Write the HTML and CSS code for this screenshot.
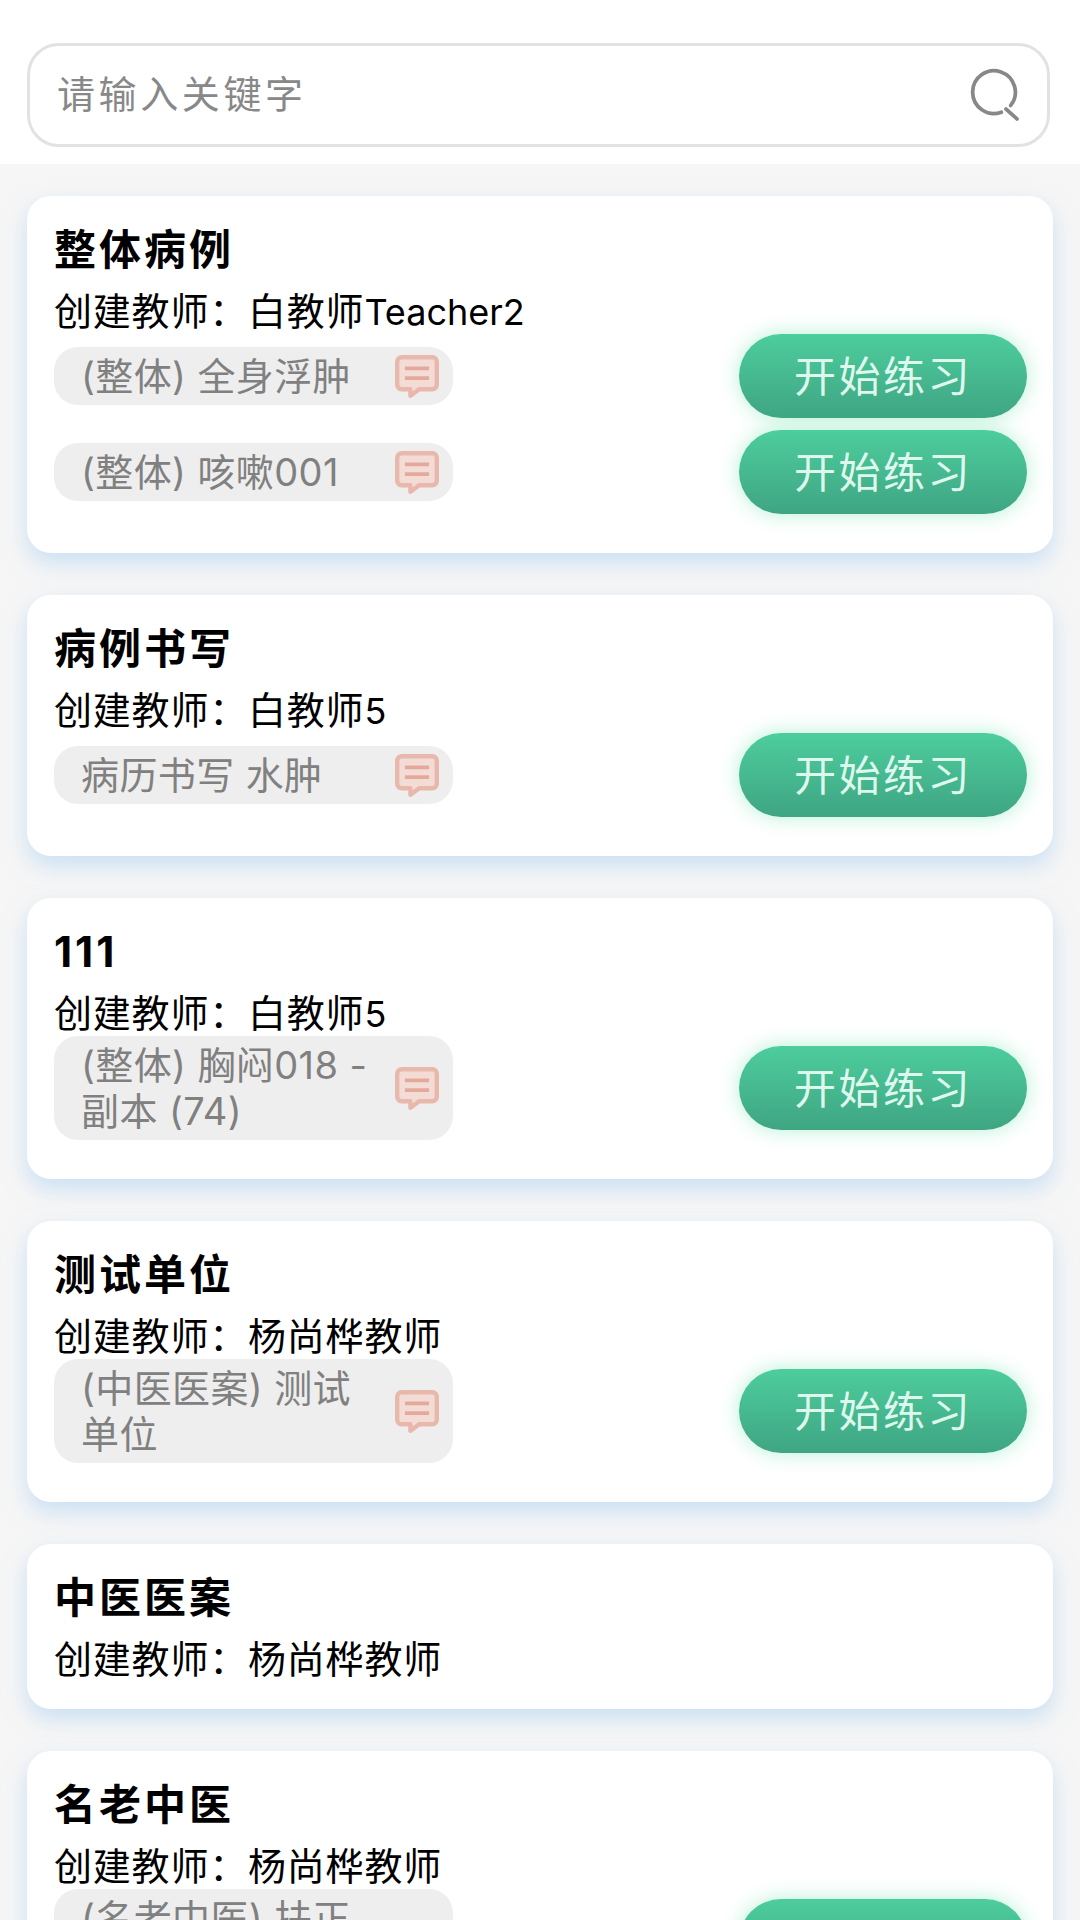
FILE: index.html
```html
<!DOCTYPE html>
<html lang="zh-CN">
<head>
    <meta charset="UTF-8">
    <meta name="viewport" content="width=device-width, initial-scale=1.0">
    <title>病例练习</title>
    <link rel="stylesheet" href="styles.css">
</head>
<body>
    <header class="search-bar">
        <div class="search-box">
            <span class="search-placeholder">请输入关键字</span>
            <svg class="search-icon" viewBox="0 0 48 48" fill="none" stroke="#888" stroke-width="3.6" stroke-linecap="round">
                <path d="M32 40.5A20.5 20.5 0 1 1 41 34"/>
                <path d="M36.5 37.5L47 47"/>
            </svg>
        </div>
    </header>

    <main class="list">
        <section class="card">
            <h2 class="card-title">整体病例</h2>
            <p class="card-teacher"><span class="teacher-label">创建教师：</span>白教师<span class="latin">Teacher2</span></p>
            <div class="case-row">
                <div class="case-pill">
                    <span class="case-name">(整体) 全身浮肿</span>
                    <svg class="case-icon" viewBox="0 0 40 40"><use href="#msg"/></svg>
                </div>
                <button class="start-btn">开始练习</button>
            </div>
            <div class="case-row">
                <div class="case-pill">
                    <span class="case-name">(整体) 咳嗽001</span>
                    <svg class="case-icon" viewBox="0 0 40 40"><use href="#msg"/></svg>
                </div>
                <button class="start-btn">开始练习</button>
            </div>
        </section>

        <section class="card">
            <h2 class="card-title">病例书写</h2>
            <p class="card-teacher"><span class="teacher-label">创建教师：</span>白教师<span class="latin">5</span></p>
            <div class="case-row">
                <div class="case-pill">
                    <span class="case-name">病历书写 水肿</span>
                    <svg class="case-icon" viewBox="0 0 40 40"><use href="#msg"/></svg>
                </div>
                <button class="start-btn">开始练习</button>
            </div>
        </section>

        <section class="card">
            <h2 class="card-title">111</h2>
            <p class="card-teacher"><span class="teacher-label">创建教师：</span>白教师<span class="latin">5</span></p>
            <div class="case-row">
                <div class="case-pill">
                    <span class="case-name">(整体) 胸闷018 - 副本 (74)</span>
                    <svg class="case-icon" viewBox="0 0 40 40"><use href="#msg"/></svg>
                </div>
                <button class="start-btn">开始练习</button>
            </div>
        </section>

        <section class="card">
            <h2 class="card-title">测试单位</h2>
            <p class="card-teacher"><span class="teacher-label">创建教师：</span>杨尚桦教师</p>
            <div class="case-row">
                <div class="case-pill">
                    <span class="case-name">(中医医案) 测试单位</span>
                    <svg class="case-icon" viewBox="0 0 40 40"><use href="#msg"/></svg>
                </div>
                <button class="start-btn">开始练习</button>
            </div>
        </section>

        <section class="card">
            <h2 class="card-title">中医医案</h2>
            <p class="card-teacher"><span class="teacher-label">创建教师：</span>杨尚桦教师</p>
        </section>

        <section class="card">
            <h2 class="card-title">名老中医</h2>
            <p class="card-teacher"><span class="teacher-label">创建教师：</span>杨尚桦教师</p>
            <div class="case-row">
                <div class="case-pill">
                    <span class="case-name">(名老中医) 扶正祛邪方案</span>
                    <svg class="case-icon" viewBox="0 0 40 40"><use href="#msg"/></svg>
                </div>
                <button class="start-btn">开始练习</button>
            </div>
        </section>
    </main>

    <!-- shared speech bubble icon -->
    <svg class="icon-defs" aria-hidden="true">
        <symbol id="msg" viewBox="0 0 40 40">
            <path d="M6 3h28a4 4 0 0 1 4 4v21a4 4 0 0 1-4 4H22l-8 6v-6H6a4 4 0 0 1-4-4V7a4 4 0 0 1 4-4z" fill="#f3dcd6" stroke="#e9b8ac" stroke-width="4" stroke-linejoin="round"/>
            <path d="M9 13h22M9 22h22" stroke="#e5a99c" stroke-width="3.4"/>
        </symbol>
    </svg>
</body>
</html>
```

FILE: styles.css
```css
* {
    box-sizing: border-box;
}
html, body {
    margin: 0;
    padding: 0;
    height: 1920px;
    overflow: hidden;
}
body {
    background-color: #f6f6f6;
    font-family: Inter, "Noto Sans CJK SC", sans-serif;
    color: #000;
}
.search-bar {
    background-color: #fff;
    height: 164px;
    padding: 43px 30px 0 27px;
}
.search-box {
    display: flex;
    align-items: center;
    justify-content: space-between;
    height: 104px;
    padding: 0 29px 0 27px;
    border: 3px solid #e2e2e2;
    border-radius: 32px;
}
.search-placeholder {
    padding-bottom: 8px;
    font-size: 38px;
    letter-spacing: 3.6px;
    color: #888;
}
.search-icon {
    width: 50px;
    height: 50px;
    overflow: visible;
}
.list {
    display: flex;
    flex-direction: column;
    gap: 42px;
    padding: 32px 27px 0;
}
.card {
    background-color: #fff;
    border-radius: 24px;
    padding: 24px 26px 27px 27px;
    box-shadow: 0 10px 22px rgba(165, 205, 240, 0.55);
}
.card-title {
    margin: 0 0 8px;
    font-size: 42px;
    line-height: 60px;
    font-weight: 700;
    letter-spacing: 3px;
}
.card-teacher {
    height: 46px;
    margin: 0;
    font-size: 38px;
    line-height: 46px;
    letter-spacing: 0.8px;
}
.latin {
    font-size: 36px;
    letter-spacing: 0;
}
.case-row {
    display: flex;
    align-items: center;
    justify-content: space-between;
    margin-bottom: 12px;
}
.case-pill {
    display: flex;
    align-items: center;
    justify-content: space-between;
    width: 399px;
    padding: 6px 14px 6px 27px;
    background-color: #eee;
    border-radius: 24px;
}
.case-name {
    width: 289px;
    font-size: 38px;
    line-height: 46px;
    letter-spacing: 0.4px;
    color: #808080;
}
.case-icon {
    flex: none;
    width: 44px;
    height: 44px;
}
.start-btn {
    width: 288px;
    height: 84px;
    padding: 0 0 6px;
    border: none;
    border-radius: 42px;
    background: linear-gradient(180deg, #4dcd9d, #3fa583);
    box-shadow: 0 0 20px rgba(90, 225, 165, 0.45);
    color: #dff8ee;
    font-family: inherit;
    font-size: 42px;
    letter-spacing: 2.5px;
}
.icon-defs {
    display: none;
}
```
